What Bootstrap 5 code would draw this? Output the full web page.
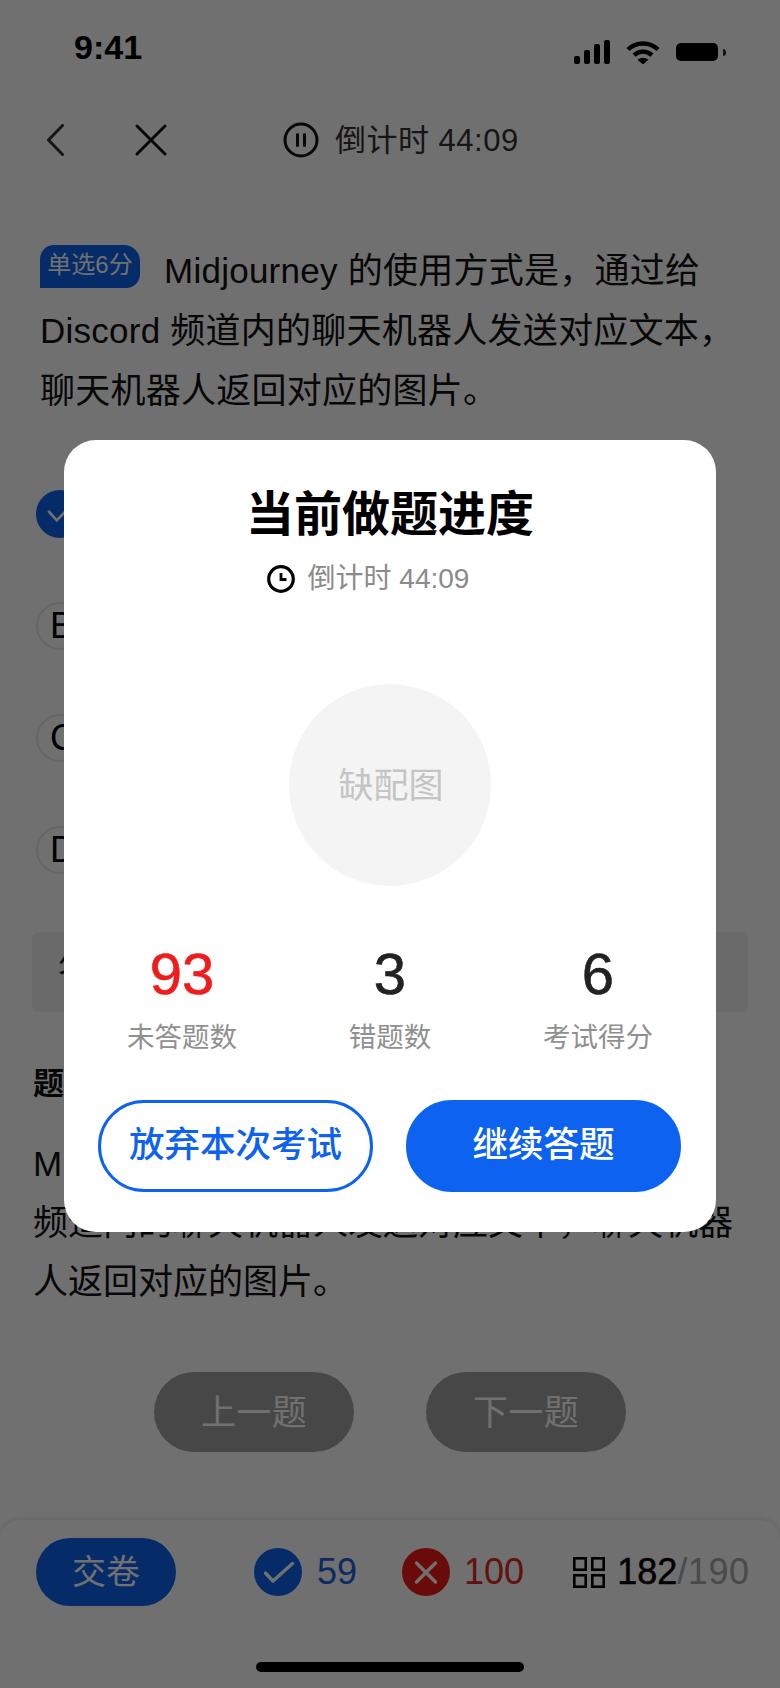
<!DOCTYPE html>
<html lang="zh-CN">
<head>
<meta charset="utf-8">
<title>当前做题进度</title>
<link href="https://cdn.jsdelivr.net/npm/bootstrap@5.3.0/dist/css/bootstrap.min.css" rel="stylesheet">
<style>
html,body{margin:0;background:#fff}
body{font-family:"Liberation Sans","Noto Sans CJK SC",sans-serif;color:#000}
.phone{width:780px;height:1688px;overflow:hidden;background:#fff}
.status-row{height:96px;padding:0 54px 0 74px}
.clock-time{font-size:34px;font-weight:700;line-height:1;margin-top:-2px}
.status-icons{margin-top:8px}
.bars{height:24px;gap:4px}
.bars i{display:block;width:6px;background:#000;border-radius:2px}
.batt{width:42px;height:18px;background:#000;border-radius:5px}
.batt-cap{width:3px;height:7px;background:#333;border-radius:0 3px 3px 0;margin-left:5px}
.top-nav{height:88px;padding-left:47px}
.nav-close{margin-left:71px}
.nav-pause{margin-left:116px}
.count-text{font-size:31px;color:#333;margin-left:16px;line-height:1;letter-spacing:.5px}
.question{font-size:35px;line-height:60px;margin-top:57px;padding:0 0 0 40px;color:#111;letter-spacing:.25px}
.tag-single{display:inline-block;width:100px;height:43px;line-height:40px;text-align:center;background:#0d62f0;color:#fff;font-size:24px;letter-spacing:0;border-radius:14px 16px 14px 0;margin-right:24px;vertical-align:10px}
.option-list{margin-top:69px;padding-left:36px;gap:64px}
.opt-dot{width:48px;height:48px;border:2px solid #e8e8e8;font-size:36px;line-height:1;padding-left:12px;color:#000}
.opt-on{background:#0d62f0;border-color:#0d62f0;padding:0}
.answer-box{margin:58px 32px 0;height:80px;background:#f2f2f2;border-radius:6px;padding-left:26px;font-size:35px;line-height:80px;color:#222}
.analysis-title{font-size:31px;font-weight:700;line-height:60px;margin:42px 0 0 33px;color:#111}
.analysis-body{font-size:35px;line-height:59px;margin-top:20px;padding:0 0 0 33px;color:#111}
.pager{margin-top:61px;gap:72px}
.pager-btn{width:200px;height:80px;background:#a2a2a2;color:#fff;font-size:35px;line-height:1;border:0;padding:0;letter-spacing:.3px}
.pager-btn,.pager-btn:disabled{opacity:1;background:#a2a2a2;color:#fff}
.bottom-bar{margin-top:68px;height:168px;border-radius:20px 20px 0 0;box-shadow:0 -2px 5px rgba(0,0,0,.09);padding-top:18px}
.bar-row{height:68px;padding-left:36px}
.submit-btn{width:140px;height:68px;background:#0d62f0;color:#fff;font-size:34px;line-height:1;border:0;padding:0}
.submit-btn:hover{background:#0d62f0;color:#fff}
.tally{font-size:36px;line-height:1}
.tally-ok{margin-left:78px;color:#1e63e0}
.tally-ok span{margin-left:15px}
.tally-bad{margin-left:45px;color:#e02a24}
.tally-bad span{margin-left:14px}
.grid-ico{margin-left:49px}
.tally-done{margin-left:12px;color:#000;-webkit-text-stroke:.5px #000}
.tally-total{color:#a9a9a9;-webkit-text-stroke:0;letter-spacing:.6px}
.home-bar{width:268px;height:10px;border-radius:5px;background:#000;margin:56px auto 0}
.veil{inset:0;background:rgba(0,0,0,.56);padding-top:440px;z-index:10}
.sheet{width:652px;height:792px;background:#fff;border-radius:32px;padding:47px 14px 0}
.sheet-title{font-size:48px;font-weight:700;line-height:56px;color:#000}
.sheet-sub{height:40px;margin-top:16px;padding-right:44px;font-size:28px;color:#8b8b8b;gap:13px}
.empty-pic{width:202px;height:202px;margin:85px auto 0;background:#f4f4f4;color:#c4c4c4;font-size:35px;padding:3px 0 0 2px}
.stats{margin-top:53px}
.stat-num{font-size:58px;line-height:70px;color:#222;-webkit-text-stroke:.6px currentColor}
.stat-red{color:#ee1c1c}
.stat-label{font-size:27.5px;line-height:40px;margin-top:9px;color:#909090}
.sheet-actions{margin-top:42px;padding:0 20px;gap:33px}
.act-btn{width:275px;height:92px;font-size:35.5px;font-weight:500;line-height:1;padding:0;border:3px solid #0d62f0}
.act-ghost{background:#fff;color:#0d62f0}
.act-ghost:hover{background:#fff;color:#0d62f0;border-color:#0d62f0}
.act-solid{background:#0d62f0;color:#fff}
.act-solid:hover{background:#0d62f0;color:#fff;border-color:#0d62f0}
</style>
</head>
<body>
<div class="phone position-relative">
  <div class="status-row d-flex align-items-center justify-content-between">
    <div class="clock-time">9:41</div>
    <div class="status-icons d-flex align-items-center">
      <div class="bars d-flex align-items-end">
        <i style="height:8px"></i><i style="height:14px"></i><i style="height:20px"></i><i style="height:24px"></i>
      </div>
      <svg class="ms-3" width="34" height="24" viewBox="0 0 34 24" fill="none" stroke="#000" stroke-width="4.4"><path d="M2 9.5C10.5 1.5 23.5 1.5 32 9.5"/><path d="M8 15.2C13.5 10.5 20.500 10.500 26 15.200"/><path d="M11.500 19.800Q17 15.500 22.500 19.800L17 24.500Z" fill="#000" stroke="none"/></svg>
      <div class="batt ms-3 ps-1"></div>
      <div class="batt-cap"></div>
    </div>
  </div>

  <div class="top-nav d-flex align-items-center">
    <svg width="17" height="32" viewBox="0 0 17 32" fill="none" stroke="#333" stroke-width="3" stroke-linecap="round" stroke-linejoin="round"><path d="M15.500 1.500 1.500 16l14 14.500"/></svg>
    <svg class="nav-close" width="32" height="32" viewBox="0 0 32 32" fill="none" stroke="#111" stroke-width="3" stroke-linecap="round"><path d="M2 2l28 28M30 2 2 30"/></svg>
    <svg class="nav-pause" width="36" height="36" viewBox="0 0 36 36" fill="none" stroke="#111" stroke-width="3"><circle cx="18" cy="18" r="16"/><path d="M14.500 12.500v11M21.500 12.500v11" stroke-linecap="round"/></svg>
    <div class="count-text">倒计时 44:09</div>
  </div>

  <div class="question"><span class="tag-single">单选6分</span>Midjourney 的使用方式是，通过给<br>Discord 频道内的聊天机器人发送对应文本，<br>聊天机器人返回对应的图片。</div>

  <div class="option-list d-flex flex-column">
    <div class="opt-dot opt-on rounded-circle d-flex align-items-center justify-content-center">
      <svg width="48" height="48" viewBox="0 0 48 48" fill="none" stroke="#fff" stroke-width="3" stroke-linecap="round" stroke-linejoin="round"><path d="M12 21.500 20.500 31 37 14"/></svg>
    </div>
    <div class="opt-dot rounded-circle d-flex align-items-center">B</div>
    <div class="opt-dot rounded-circle d-flex align-items-center">C</div>
    <div class="opt-dot rounded-circle d-flex align-items-center">D</div>
  </div>

  <div class="answer-box">答案</div>
  <div class="analysis-title">题目解析</div>
  <div class="analysis-body">Midjourney 的使用方式是，通过给 Discord<br>频道内的聊天机器人发送对应文本，聊天机器<br>人返回对应的图片。</div>

  <div class="pager d-flex justify-content-center">
    <button class="btn pager-btn rounded-pill" disabled>上一题</button>
    <button class="btn pager-btn rounded-pill" disabled>下一题</button>
  </div>

  <div class="bottom-bar">
    <div class="bar-row d-flex align-items-center">
      <button class="btn submit-btn rounded-pill">交卷</button>
      <div class="tally tally-ok d-flex align-items-center">
        <svg width="48" height="48" viewBox="0 0 48 48"><circle cx="24" cy="24" r="24" fill="#0d62f0"/><path d="M11.500 25l7.500 8 19.500-17.500" fill="none" stroke="#fff" stroke-width="3.400" stroke-linecap="round" stroke-linejoin="round"/></svg>
        <span>59</span>
      </div>
      <div class="tally tally-bad d-flex align-items-center">
        <svg width="48" height="48" viewBox="0 0 48 48"><circle cx="24" cy="24" r="24" fill="#f01a14"/><path d="M14.500 15l19 19M33.500 15l-19 19" fill="none" stroke="#fff" stroke-width="3.400" stroke-linecap="round"/></svg>
        <span>100</span>
      </div>
      <svg class="grid-ico" width="32" height="31" viewBox="0 0 32 31" fill="none" stroke="#000" stroke-width="2.600"><rect x="1.300" y="1.300" width="11.400" height="11.400"/><rect x="19.300" y="1.300" width="11.400" height="11.400"/><rect x="1.300" y="18.300" width="11.400" height="11.400"/><rect x="19.300" y="18.300" width="11.400" height="11.400"/></svg>
      <div class="tally tally-done">182<span class="tally-total">/190</span></div>
    </div>
    <div class="home-bar"></div>
  </div>

  <div class="veil position-absolute d-flex justify-content-center align-items-start">
    <div class="sheet">
      <div class="sheet-title text-center">当前做题进度</div>
      <div class="sheet-sub d-flex align-items-center justify-content-center">
        <svg width="28" height="28" viewBox="0 0 28 28" fill="none" stroke="#000"><circle cx="14" cy="14" r="12.300" stroke-width="3.200"/><path d="M14 8v6.500h5.500" stroke-width="2.800"/></svg>
        <span>倒计时 44:09</span>
      </div>
      <div class="empty-pic rounded-circle d-flex align-items-center justify-content-center">缺配图</div>
      <div class="stats row g-0 text-center">
        <div class="col-4"><div class="stat-num stat-red">93</div><div class="stat-label">未答题数</div></div>
        <div class="col-4"><div class="stat-num">3</div><div class="stat-label">错题数</div></div>
        <div class="col-4"><div class="stat-num">6</div><div class="stat-label">考试得分</div></div>
      </div>
      <div class="sheet-actions d-flex">
        <button class="btn act-btn act-ghost rounded-pill">放弃本次考试</button>
        <button class="btn act-btn act-solid rounded-pill">继续答题</button>
      </div>
    </div>
  </div>
</div>
<script src="https://cdn.jsdelivr.net/npm/bootstrap@5.3.0/dist/js/bootstrap.bundle.min.js"></script>
</body>
</html>
